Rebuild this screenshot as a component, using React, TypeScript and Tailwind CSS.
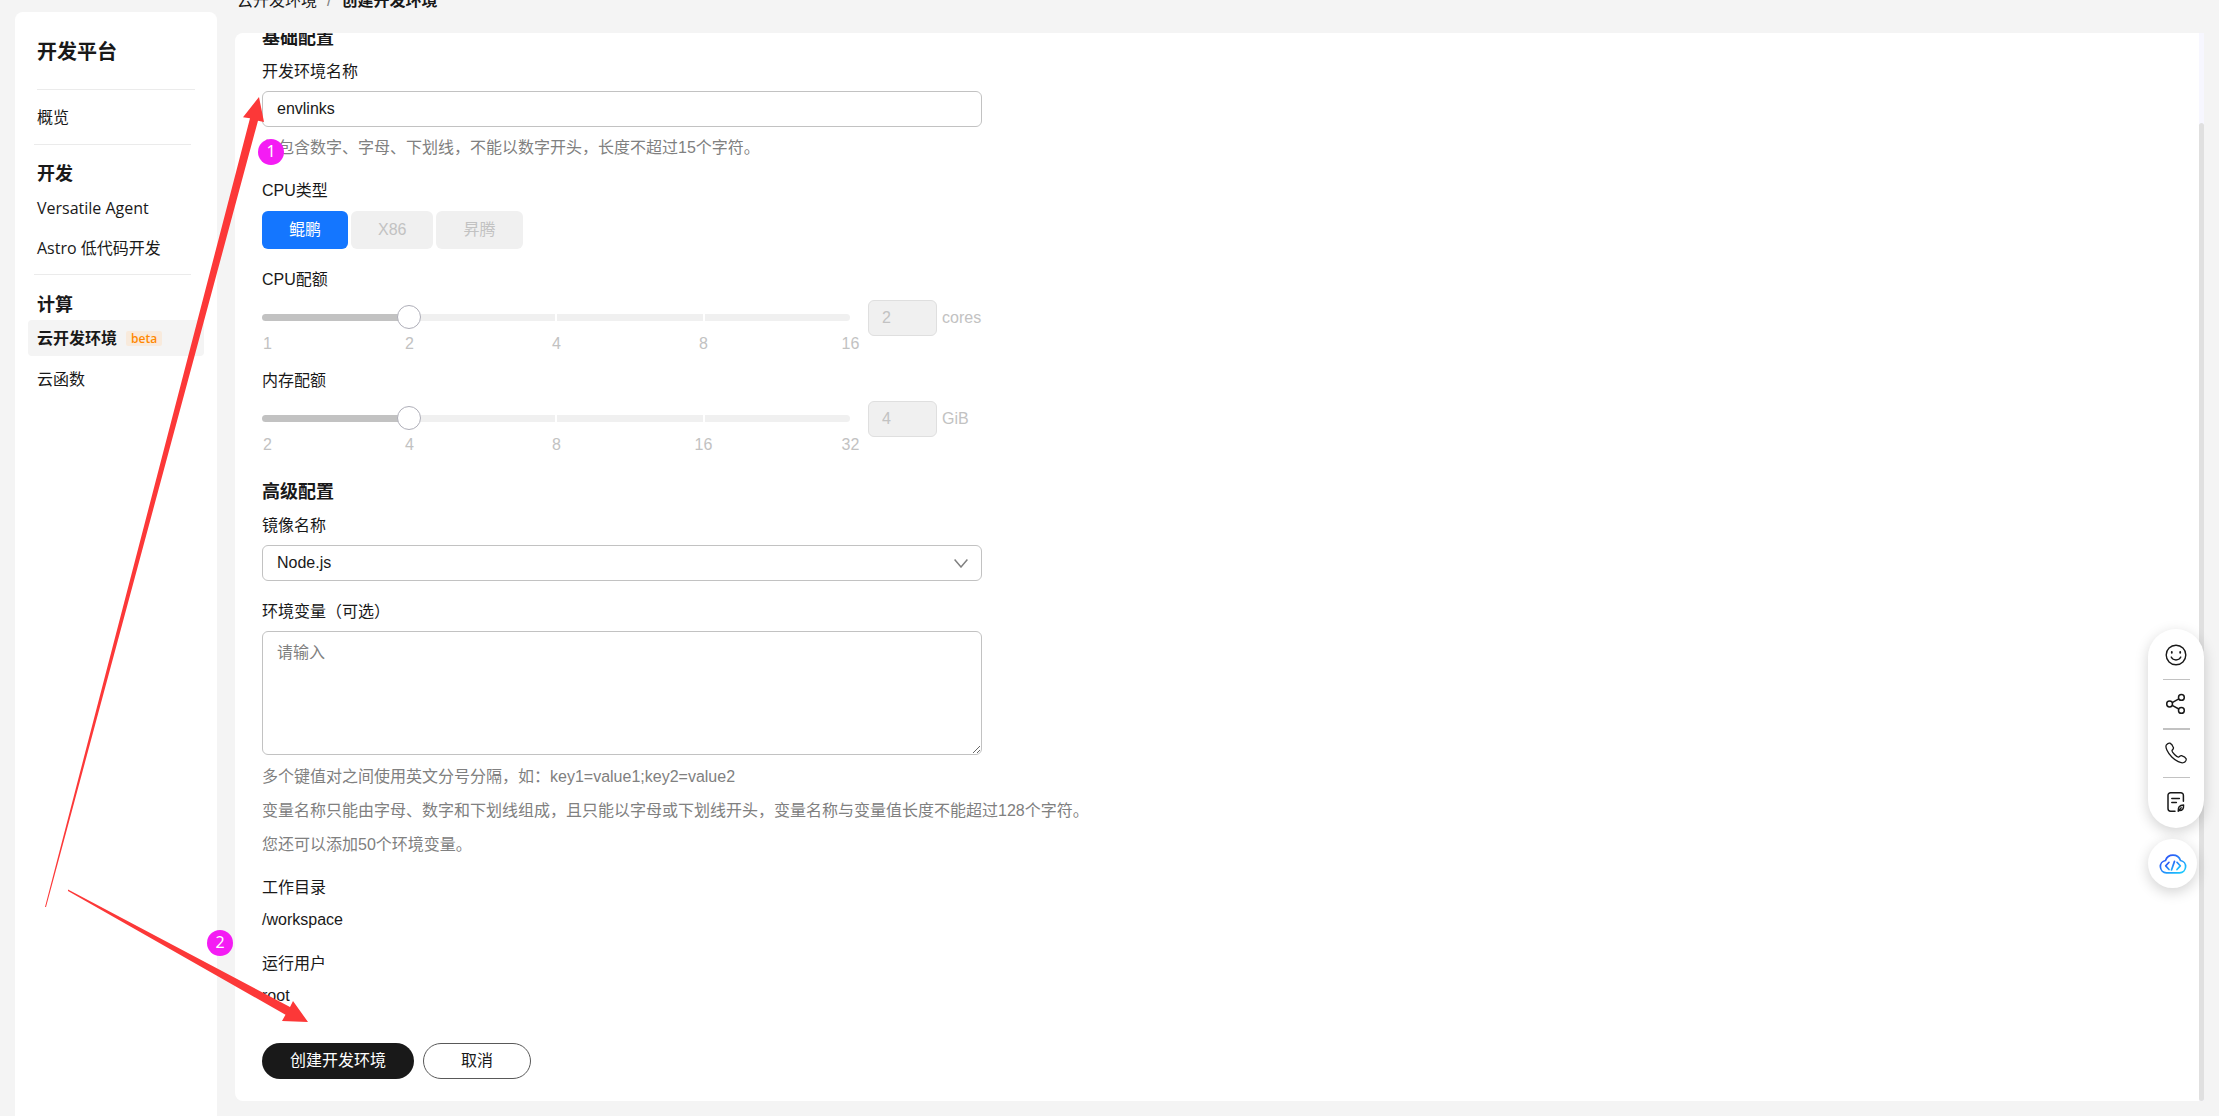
import { useState } from "react";

interface QuotaSliderProps {
  id: string;
  label: string;
  marks: number[];
  index: number;
  unit: string;
}

function QuotaSlider({ id, label, marks, index, unit }: QuotaSliderProps) {
  return (
    <div className="mb-[13px]">
      <label htmlFor={id} className="block mb-2">
        {label}
      </label>
      <div className="flex items-start text-[#c2c2c2]">
        <div className="relative w-[588px] mr-[18px] pt-[14px]">
          {/* Track */}
          <div className="flex gap-[2px] h-[7px] rounded-full overflow-hidden">
            {marks.slice(1).map((mark, i) => (
              <div
                key={mark}
                className={
                  i < index ? "flex-1 bg-[#c2c2c2]" : "flex-1 bg-[#f0f0f0]"
                }
              />
            ))}
          </div>
          <input
            id={id}
            type="range"
            min={0}
            max={marks.length - 1}
            value={index}
            disabled
            readOnly
            className="absolute -left-3 top-[5px] w-[612px] h-6 appearance-none bg-transparent [&::-webkit-slider-thumb]:appearance-none [&::-webkit-slider-thumb]:size-6 [&::-webkit-slider-thumb]:rounded-full [&::-webkit-slider-thumb]:border [&::-webkit-slider-thumb]:border-[#aeaeb8] [&::-webkit-slider-thumb]:bg-white"
          />
          {/* Marks */}
          <div className="flex mt-[11px]">
            {marks.map((mark, i) => (
              <span
                key={mark}
                className={
                  i === 0
                    ? "w-[74px] shrink-0 pl-px"
                    : "w-[147px] shrink-0 text-center"
                }
              >
                {mark}
              </span>
            ))}
          </div>
        </div>
        <input
          aria-label={`${label} ${unit}`}
          value={marks[index]}
          disabled
          readOnly
          className="w-[69px] h-9 px-[13px] rounded-md border border-[#dfdfdf] bg-[#f0f0f0]"
        />
        <span className="ml-[5px] leading-9">{unit}</span>
      </div>
    </div>
  );
}

function Sidebar() {
  return (
    <aside className="w-[202px] shrink-0 mt-3 ml-[15px] rounded-t-lg bg-white font-['Open_Sans','Noto_Sans_CJK_SC',sans-serif]">
      <h1 className="pl-[22px] pt-[26px] pb-[23px] text-xl leading-7 font-bold">
        开发平台
      </h1>
      <nav className="flex flex-col">
        <div className="ml-[22px] mr-[22px] border-t border-[#ebebeb]" />
        <a href="#overview" className="pl-[22px] mt-[15px] mb-[15px]">
          概览
        </a>
        <div className="ml-[19px] mr-[26px] border-t border-[#ebebeb]" />
        <h2 className="pl-[22px] mt-4 text-lg leading-6 font-bold">开发</h2>
        <a href="#agent" className="pl-[22px] mt-[11px]">
          Versatile Agent
        </a>
        <a href="#astro" className="pl-[22px] mt-4 mb-[14px]">
          Astro 低代码开发
        </a>
        <div className="ml-[19px] mr-[26px] border-t border-[#ebebeb]" />
        <h2 className="pl-[22px] mt-[17px] text-lg leading-6 font-bold">
          计算
        </h2>
        <a
          href="#env"
          className="flex items-center h-9 mt-1 ml-[13px] mr-[13px] pl-[9px] rounded bg-[#f4f4f4] font-bold"
        >
          云开发环境
          <span className="ml-[9px] px-[5px] h-[15px] rounded-xs bg-[#f8eadc] text-[#ff8800] text-xs leading-[15px] font-semibold">
            beta
          </span>
        </a>
        <a href="#function" className="pl-[22px] mt-[11px]">
          云函数
        </a>
      </nav>
    </aside>
  );
}

function FloatingTools() {
  return (
    <div className="absolute right-[15px] top-[629px] flex flex-col items-start gap-[11px]">
      <div className="flex flex-col items-center w-14 h-[199px] py-0.5 rounded-full bg-white shadow-[0_4px_14px_rgba(0,0,0,0.18)]">
        <button aria-label="满意度" className="flex-1 flex items-center">
          <svg
            viewBox="0 0 22 22"
            className="size-[22px]"
            fill="none"
            stroke="#191919"
            strokeWidth="1.4"
            strokeLinecap="round"
          >
            <circle cx="11" cy="11" r="9.8" />
            <path d="M6.200 13a5.400 5.400 0 0 0 9.600 0" />
            <path d="M6.800 8v.8M15.200 8v.8" strokeWidth="1.800" />
          </svg>
        </button>
        <div className="w-[27px] h-px bg-[#c2c2c2]" />
        <button aria-label="分享" className="flex-1 flex items-center">
          <svg
            viewBox="0 0 22 22"
            className="size-[22px]"
            fill="none"
            stroke="#191919"
            strokeWidth="1.5"
          >
            <circle cx="4.6" cy="11" r="2.9" />
            <circle cx="16.4" cy="4.4" r="2.9" />
            <circle cx="16.4" cy="17.4" r="2.9" />
            <path d="M7.2 9.6 13.8 5.8M7.2 12.4l6.6 3.6" />
          </svg>
        </button>
        <div className="w-[27px] h-0.5 bg-[#c2c2c2]" />
        <button aria-label="电话" className="flex-1 flex items-center">
          <svg
            viewBox="0 0 22 22"
            className="size-[22px]"
            fill="none"
            stroke="#191919"
            strokeWidth="1.3"
            strokeLinejoin="round"
          >
            <path d="M1.4 2.800C2.600 1.400 4 .8 5 1.200c1 .5 3 3.300 3.400 4.400.5 1.200-1.100 2-1.400 3.100-.3 1.300 4.900 6.600 6.400 6.400 1.200-.2 1.900-1.900 3.100-1.500 1.200.4 4.200 2.200 4.600 3.200.4 1.100-.8 3-2.300 3.700-2.700 1.200-8-1.500-12-5.500S-.2 5 1.400 2.800Z" />
          </svg>
        </button>
        <div className="w-[27px] h-px bg-[#c2c2c2]" />
        <button aria-label="反馈" className="flex-1 flex items-center">
          <svg
            viewBox="0 0 22 22"
            className="size-[22px]"
            fill="none"
            stroke="#191919"
            strokeWidth="1.5"
            strokeLinecap="round"
          >
            <path d="M10 20.200H5.600a2.600 2.600 0 0 1-2.600-2.600V4.400a2.600 2.600 0 0 1 2.600-2.600h10.200a2.600 2.600 0 0 1 2.600 2.600v5.800" />
            <path d="M6.800 7.600h7.600M6.800 11.600h4.600" />
            <path
              d="M13.200 20.200c-.4-3.800 1.200-6 5.400-6.200.2 3.800-1.200 5.600-4 5.600M13.200 20.200l3-3.400"
              strokeWidth="1.400"
              strokeLinejoin="round"
            />
          </svg>
        </button>
      </div>
      <button
        aria-label="云开发"
        className="flex items-center justify-center size-[49px] rounded-full bg-white shadow-[0_4px_14px_rgba(0,0,0,0.18)]"
      >
        <svg viewBox="0 0 28 20" className="w-7 h-5" fill="none">
          <defs>
            <linearGradient id="cloud" x1="0" y1="0" x2="1" y2="1">
              <stop offset="0.2" stopColor="#2b5cf6" />
              <stop offset="1" stopColor="#19d3ff" />
            </linearGradient>
          </defs>
          <g
            stroke="url(#cloud)"
            strokeWidth="1.7"
            strokeLinecap="round"
            strokeLinejoin="round"
          >
            <path d="M7.400 18.800a6.200 6.200 0 0 1-.9-12.300C7.600 3.200 10.400 1.100 14 1.100s6.400 2.100 7.500 5.400a6.200 6.200 0 0 1-.9 12.300Z" />
            <path d="m10 8.300-3.300 3.600 3.300 3.600M18 8.300l3.300 3.600-3.300 3.600M15.500 7.400l-3 8.600" />
          </g>
        </svg>
      </button>
    </div>
  );
}

function Annotations() {
  return (
    <div className="absolute inset-0 pointer-events-none text-white text-base leading-6 text-center font-['Noto_Sans',sans-serif]">
      <svg width="340" height="1040" className="absolute left-0 top-0">
        <g fill="#fc3838">
          <path d="M45 907 250 118.300 243 117.300 259 97 264 122 258 120.700 46 907Z" />
          <path d="M68 889.500 290 1007 293 1001 308 1022 282 1021 285.500 1014.700 68 891Z" />
        </g>
      </svg>
      <span className="absolute left-[258px] top-[139px] size-[26px] rounded-full bg-[#f41cf4]">
        1
      </span>
      <span className="absolute left-[207px] top-[930px] size-[26px] rounded-full bg-[#f41cf4]">
        2
      </span>
    </div>
  );
}

export default function App() {
  const [name, setName] = useState("envlinks");
  const [vars, setVars] = useState("");

  return (
    <div className="relative flex h-screen overflow-hidden bg-[#f4f4f4] text-base leading-6 text-[#191919] font-['Liberation_Sans','Noto_Sans_CJK_SC',sans-serif]">
      <Sidebar />

      <main className="flex flex-col flex-1 min-w-0 ml-[18px] mr-[15px]">
        {/* Breadcrumb */}
        <header className="h-[33px] shrink-0 overflow-hidden">
          <nav className="flex -mt-[11px] pl-[2px]">
            <a href="#env">云开发环境</a>
            <span className="mx-[10px] text-[#808080]">/</span>
            <span className="font-bold">创建开发环境</span>
          </nav>
        </header>

        <div className="flex flex-1 min-h-0 mb-[15px]">
          <form className="flex-1 min-w-0 overflow-hidden rounded-l-lg bg-white pl-[27px]">
            <h2 className="-mt-[7px] mb-[10px] text-lg leading-6 font-bold">
              基础配置
            </h2>

            <div className="mb-[19px]">
              <label htmlFor="name" className="block mb-[7px]">
                开发环境名称
              </label>
              <input
                id="name"
                value={name}
                onChange={(e) => setName(e.target.value)}
                className="block w-[720px] h-9 px-[14px] rounded-md border border-[#c2c2c2] bg-white"
              />
              <p className="mt-[9px] text-[#808080]">
                仅包含数字、字母、下划线，不能以数字开头，长度不超过15个字符。
              </p>
            </div>

            <div className="mb-[19px]">
              <p className="mb-2">CPU类型</p>
              <div className="flex gap-[3px]">
                <button
                  type="button"
                  className="h-[38px] px-[27px] rounded-md bg-[#1476ff] text-white"
                >
                  鲲鹏
                </button>
                <button
                  type="button"
                  disabled
                  className="h-[38px] px-[27px] rounded-md bg-[#f0f0f0] text-[#c2c2c2]"
                >
                  X86
                </button>
                <button
                  type="button"
                  disabled
                  className="h-[38px] px-[27px] rounded-md bg-[#f0f0f0] text-[#c2c2c2]"
                >
                  昇腾
                </button>
              </div>
            </div>

            <QuotaSlider
              id="cpu"
              label="CPU配额"
              marks={[1, 2, 4, 8, 16]}
              index={1}
              unit="cores"
            />
            <QuotaSlider
              id="memory"
              label="内存配额"
              marks={[2, 4, 8, 16, 32]}
              index={1}
              unit="GiB"
            />

            <h2 className="mt-[23px] mb-[10px] text-lg leading-6 font-bold">
              高级配置
            </h2>

            <div className="mb-[19px]">
              <label htmlFor="image" className="block mb-[7px]">
                镜像名称
              </label>
              <div className="relative w-[720px]">
                <select
                  id="image"
                  className="block w-full h-9 px-[14px] rounded-md border border-[#c2c2c2] bg-white appearance-none"
                >
                  <option>Node.js</option>
                </select>
                <svg
                  viewBox="0 0 14 9"
                  className="absolute right-[14px] top-[14px] w-[14px] h-[9px]"
                  fill="none"
                  stroke="#808080"
                  strokeWidth="1.5"
                >
                  <path d="m.6.6 6.400 7.400L13.400.6" />
                </svg>
              </div>
            </div>

            <div className="mb-[14px]">
              <label htmlFor="vars" className="block mb-[7px]">
                环境变量（可选）
              </label>
              <textarea
                id="vars"
                value={vars}
                onChange={(e) => setVars(e.target.value)}
                placeholder="请输入"
                className="block w-[720px] h-[124px] px-[14px] py-[9px] rounded-md border border-[#c2c2c2] bg-white placeholder:text-[#808080]"
              />
              <div className="mt-[5px] leading-[34px] text-[#808080]">
                <p>多个键值对之间使用英文分号分隔，如：key1=value1;key2=value2</p>
                <p>
                  变量名称只能由字母、数字和下划线组成，且只能以字母或下划线开头，变量名称与变量值长度不能超过128个字符。
                </p>
                <p>您还可以添加50个环境变量。</p>
              </div>
            </div>

            <dl>
              <dt className="mb-2">工作目录</dt>
              <dd className="mb-5">/workspace</dd>
              <dt className="mb-2">运行用户</dt>
              <dd>root</dd>
            </dl>

            <div className="flex gap-[9px] mt-[35px]">
              <button
                type="submit"
                className="h-9 px-7 rounded-full bg-[#191919] text-white"
              >
                创建开发环境
              </button>
              <button
                type="button"
                className="h-9 px-[37px] rounded-full border border-[#595959] bg-white"
              >
                取消
              </button>
            </div>
          </form>

          {/* Scrollbar */}
          <div className="w-[5px] bg-[#f7f7ff] pt-[90px]">
            <div className="h-full rounded-full bg-[#e0e0e0]" />
          </div>
        </div>
      </main>

      <FloatingTools />
      <Annotations />
    </div>
  );
}
